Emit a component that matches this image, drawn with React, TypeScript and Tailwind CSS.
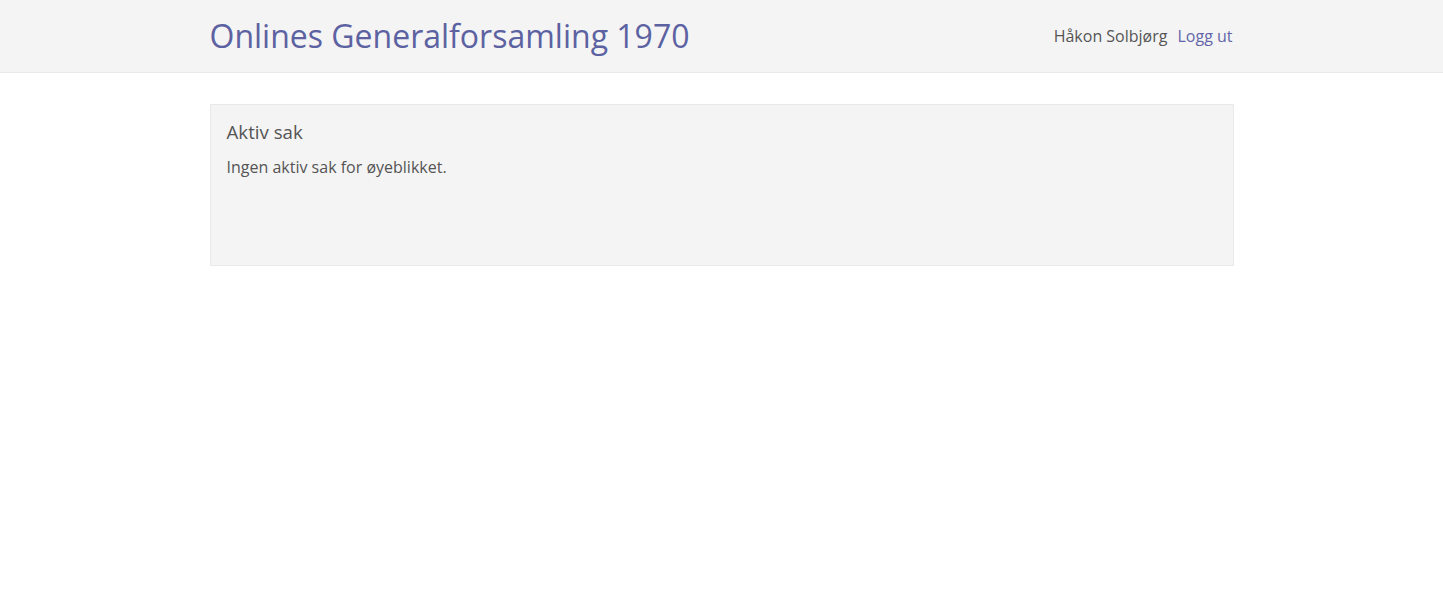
import React from 'react';

const font = { fontFamily: '"Open Sans", "Noto Sans", sans-serif' };

export default function App() {
  return (
    <div className="min-h-screen bg-white" style={font}>
      {/* Header */}
      <header className="h-[73px] bg-[#f4f4f4] border-b border-[#e9e9e9]">
        <div className="mx-auto flex h-full w-[1024px] items-center justify-between">
          <h1 className="text-[32px] leading-none text-[#5c62a1]">
            Onlines Generalforsamling 1970
          </h1>
          <div className="flex items-center gap-[10px] pr-[1px] text-[16px]">
            <span className="text-[#555555]">Håkon Solbjørg</span>
            <a href="#" className="text-[#6266a8]">Logg ut</a>
          </div>
        </div>
      </header>

      {/* Main */}
      <main className="mx-auto mt-[31px] w-[1024px]">
        <section className="h-[162px] border border-[#e9e9e9] bg-[#f4f4f4] px-[16px] pt-[14px]">
          <h2 className="text-[18.7px] leading-[26px] text-[#555555]">Aktiv sak</h2>
          <p className="mt-[11px] text-[16px] leading-[22px] text-[#555555]">
            Ingen aktiv sak for øyeblikket.
          </p>
        </section>
      </main>
    </div>
  );
}
